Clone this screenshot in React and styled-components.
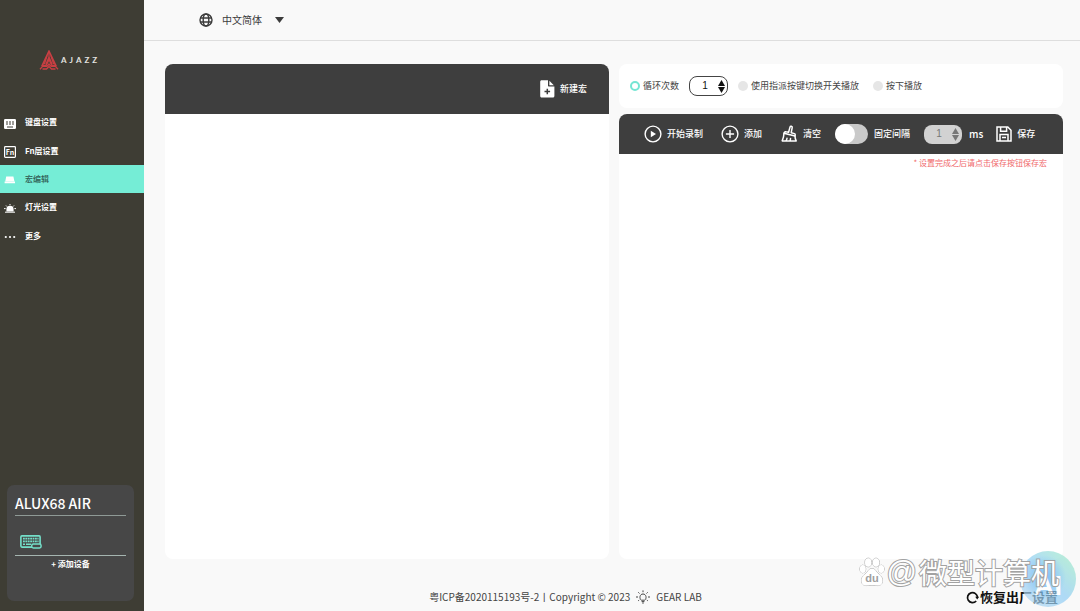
import React, { useState } from "react";
import styled, { createGlobalStyle, css } from "styled-components";

const GlobalStyle = createGlobalStyle`
  *, *::before, *::after { box-sizing: border-box; }
  body {
    margin: 0;
    background: #f9f9f9;
    color: #444;
    font-family: "Noto Sans CJK SC", "Noto Sans", sans-serif;
    font-size: 9px;
    line-height: 14px;
  }
  button, input, select { font: inherit; color: inherit; margin: 0; }
  button { border: 0; background: none; padding: 0; cursor: pointer; }
  a { color: inherit; text-decoration: none; }
`;

const Page = styled.div`
  position: relative;
  display: flex;
  min-height: 100vh;
`;

const Sidebar = styled.aside`
  display: flex;
  flex-direction: column;
  flex: 0 0 144px;
  background: #3e3d34;
  color: #fff;
`;

const Brand = styled.div`
  display: flex;
  align-items: center;
  gap: 2px;
  height: 108px;
  padding: 12px 0 0 39px;
`;

const Wordmark = styled.span`
  color: #e4e4e0;
  font-family: Lato, sans-serif;
  font-size: 8px;
  font-weight: 700;
  letter-spacing: 3px;
`;

const Nav = styled.nav`
  display: grid;
  grid-template-rows: repeat(5, 1fr);
  height: 142px;
`;

const NavLink = styled.a`
  display: flex;
  align-items: center;
  gap: 9px;
  padding-left: 4px;
  font-size: 8px;
  font-weight: 700;
  svg { margin-top: 3px; }
  ${(p) =>
    p.$active &&
    css`
      background: #75edd6;
      color: #2f5a52;
      font-weight: 500;
      svg { color: #fff; }
    `}
`;

const DeviceCard = styled.section`
  margin: auto 10px 10px 7px;
  height: 116px;
  padding: 8px;
  border-radius: 7px;
  background: #474747;
`;

const DeviceName = styled.h2`
  margin: 0;
  padding-bottom: 2px;
  border-bottom: 1px solid #8f9a96;
  font-size: 14px;
  line-height: 20px;
  font-weight: 500;
`;

const DeviceSlot = styled.div`
  display: flex;
  align-items: flex-end;
  height: 40px;
  padding: 0 0 6px 5px;
  border-bottom: 1px solid #a5b5b0;
  color: #74dfc9;
`;

const AddDevice = styled.button`
  display: block;
  width: 100%;
  padding-top: 1px;
  font-size: 8px;
  font-weight: 700;
`;

const Main = styled.div`
  display: flex;
  flex-direction: column;
  flex: 1;
  min-width: 0;
`;

const TopBar = styled.header`
  display: flex;
  align-items: center;
  height: 41px;
  padding-left: 55px;
  border-bottom: 1px solid #dedede;
`;

const Language = styled.label`
  display: flex;
  align-items: center;
  gap: 9px;
  color: #3c3c3c;
`;

const LanguageSelect = styled.select`
  appearance: none;
  width: 44px;
  border: 0;
  padding: 0;
  background: none;
  font-size: 10px;
`;

const Columns = styled.main`
  display: grid;
  grid-template-columns: 1fr 1fr;
  gap: 10px;
  flex: 1;
  padding: 23px 17px 0 21px;
`;

const Panel = styled.section`
  display: flex;
  flex-direction: column;
  flex: 1;
  overflow: hidden;
  border-radius: 8px;
  background: #fff;
`;

const Bar = styled.div`
  display: flex;
  align-items: center;
  background: #3e3e3e;
  color: #fff;
  font-weight: 500;
`;

const MacroBar = styled(Bar)`
  justify-content: flex-end;
  height: 50px;
  padding-right: 22px;
`;

const ToolBar = styled(Bar)`
  height: 40px;
  padding-left: 25px;
`;

const Tool = styled.button`
  display: flex;
  align-items: center;
  gap: 5px;
  margin-right: ${(p) => p.$after || 0}px;
  font-weight: 500;
  white-space: nowrap;
`;

const RightColumn = styled.div`
  display: flex;
  flex-direction: column;
  gap: 6px;
`;

const PlayModes = styled.form`
  display: flex;
  align-items: center;
  height: 44px;
  padding-left: 11px;
  border-radius: 8px;
  background: #fff;
`;

const Choice = styled.label`
  display: flex;
  align-items: center;
  gap: 3px;
  margin-right: ${(p) => p.$after || 0}px;
  white-space: nowrap;
`;

const Radio = styled.input`
  appearance: none;
  width: 10px;
  height: 10px;
  border-radius: 50%;
  background: #e6e6e6;
  &:checked {
    border: 2px solid #75e5d3;
    background: #fff;
  }
`;

const Stepper = styled.span`
  display: flex;
  align-items: center;
  justify-content: space-between;
  width: ${(p) => (p.$muted ? 38 : 39)}px;
  height: ${(p) => (p.$muted ? 19 : 20)}px;
  margin-right: ${(p) => p.$after}px;
  padding: 0 ${(p) => (p.$muted ? 3 : 2)}px 0 10px;
  border: ${(p) => (p.$muted ? "0" : "1px solid #444")};
  border-radius: 8px;
  background: ${(p) => (p.$muted ? "#d2d2d2" : "#fff")};
  color: ${(p) => (p.$muted ? "#777" : "#111")};
`;

const StepperInput = styled.input`
  width: 10px;
  border: 0;
  padding: 0;
  background: none;
  text-align: center;
  font-family: "Liberation Sans", sans-serif;
  font-size: 10px;
`;

const Arrows = styled.span`
  display: flex;
  flex-direction: column;
  gap: 1px;
`;

const Arrow = styled.button`
  display: block;
  height: 6px;
  svg { display: block; }
`;

const SwitchLabel = styled.label`
  display: flex;
  align-items: center;
  gap: 6px;
  margin-right: 14px;
  white-space: nowrap;
`;

const Switch = styled.input`
  appearance: none;
  display: flex;
  width: 33px;
  height: 20px;
  border-radius: 10px;
  background: #c9c9c9;
  &::before {
    content: "";
    width: 20px;
    height: 20px;
    border-radius: 10px;
    background: #fff;
  }
  &:checked { justify-content: flex-end; background: #75edd6; }
`;

const Unit = styled.span`
  margin-right: 13px;
  font-size: 10px;
`;

const Hint = styled.p`
  margin: 2px 16px 0;
  color: #f0676b;
  font-size: 8px;
  text-align: right;
`;

const Footer = styled.footer`
  display: flex;
  align-items: center;
  height: 52px;
  padding: 24px 22px 0 21px;
`;

const Copyright = styled.div`
  display: flex;
  align-items: center;
  justify-content: center;
  gap: 6px;
  flex: 1;
  color: #444;
  font-size: 10px;
  white-space: nowrap;
`;

const ResetButton = styled.button`
  display: flex;
  align-items: center;
  gap: 1px;
  color: #111;
  font-size: 13px;
  font-weight: 700;
  white-space: nowrap;
`;

const Assistant = styled.div`
  position: absolute;
  right: 4px;
  bottom: 4px;
  width: 56px;
  height: 56px;
  opacity: 0.7;
  svg { display: block; }
`;

const Watermark = styled.div`
  position: absolute;
  right: 21px;
  bottom: 19px;
  display: flex;
  align-items: center;
  color: #fff;
  font-size: 28px;
  line-height: 40px;
  -webkit-text-stroke: 2px #a2a2a2;
  paint-order: stroke fill;
  white-space: nowrap;
  pointer-events: none;
`;

const AtSign = styled.span`
  margin: 0 2px;
  font-family: "Liberation Sans", sans-serif;
  font-size: 30px;
`;

const Paw = styled.svg`
  -webkit-text-stroke: 0;
`;

function Logo() {
  return (
    <svg width="20" height="21" viewBox="0 0 20 21" fill="none" stroke="#c93f43">
      <path d="M10 1.2 L3.2 15.5 L7 15.5 L10 9.5 L13 15.5 L16.8 15.5 Z" strokeWidth="1.6" />
      <path d="M10 3v7M8 6l-2.7 8M12 6l2.7 8M10 7l-3 7M10 7l3 7" strokeWidth="1.3" />
      <path d="M1 19.2l2.6-2.8h4.2L10 14l2.2 2.4h4.2L19 19.2M3.5 19h4l2.5-2.5 2.5 2.5h4" strokeWidth="1.3" />
    </svg>
  );
}

function KeyboardIcon() {
  return (
    <svg width="12" height="10" viewBox="0 0 12 10">
      <rect width="12" height="10" rx="1.2" fill="currentColor" />
      <path d="M2 3h2M5 3h2M8 3h2M2 5h2M5 5h2M8 5h2M3 8h6" stroke="#3e3d34" strokeWidth="1" />
    </svg>
  );
}

function FnIcon() {
  return (
    <svg width="12" height="12" viewBox="0 0 12 12" fill="none">
      <rect x=".6" y=".6" width="10.8" height="10.8" rx=".8" stroke="currentColor" strokeWidth="1.2" />
      <text x="6" y="9" textAnchor="middle" fontSize="7" fontWeight="700" fill="currentColor">Fn</text>
    </svg>
  );
}

function MacroIcon() {
  return (
    <svg width="12" height="8" viewBox="0 0 12 8" fill="currentColor">
      <path d="M2.2.5h7.2l1 4.700H1.300zM.6 5.400h10.400v1.800H.6z" />
    </svg>
  );
}

function LightIcon() {
  return (
    <svg width="12" height="9" viewBox="0 0 12 9" fill="currentColor" stroke="currentColor">
      <path d="M2.400 7.500V5.400a3.600 3.600 0 0 1 7.200 0v2.100z" stroke="none" />
      <path d="M1 8.200h10M6 0v1.200M2 1.500l1 1.100M10 1.500l-1 1.100M0 4.600h1.600M10.400 4.600H12" strokeWidth="1" />
    </svg>
  );
}

function MoreIcon() {
  return (
    <svg width="12" height="4" viewBox="0 0 12 4" fill="currentColor">
      <circle cx="1.800" cy="2" r="1.100" /><circle cx="6" cy="2" r="1.100" /><circle cx="10.200" cy="2" r="1.100" />
    </svg>
  );
}

function DeviceIcon() {
  return (
    <svg width="22" height="14" viewBox="0 0 22 14" fill="none" stroke="currentColor">
      <rect x=".9" y=".9" width="19.2" height="11.2" rx="1" strokeWidth="1.6" />
      <path d="M3 3.600h15.500M3 6.300h15.500" strokeWidth="1.700" strokeDasharray="1.800 .6" />
      <path d="M3 9.200h2M6 9.200h5" strokeWidth="1.600" />
      <rect x="11.700" y="9.100" width="9.400" height="3.800" rx="1.600" fill="#474747" strokeWidth="1.500" />
    </svg>
  );
}

function GlobeIcon() {
  return (
    <svg width="14" height="14" viewBox="0 0 14 14" fill="none" stroke="currentColor" strokeWidth="1.4">
      <circle cx="7" cy="7" r="6" />
      <ellipse cx="7" cy="7" rx="2.8" ry="6" />
      <path d="M1.4 5h11.2M1.4 9h11.2" />
    </svg>
  );
}

function NewFileIcon() {
  return (
    <svg width="15" height="18" viewBox="0 0 15 18">
      <path d="M1.6.3H8v5.2c0 .6.4 1 1 1h5.4v9.6c0 .9-.6 1.5-1.5 1.5H1.6C.8 17.6.2 17 .2 16.1V1.8C.2.9.8.3 1.6.3z" fill="currentColor" />
      <path d="M9.4.8l4.4 4.5H9.4z" fill="currentColor" />
      <path d="M7.3 8.7v5.6M4.5 11.5h5.6" stroke="#3e3e3e" strokeWidth="1.5" />
    </svg>
  );
}

function PlayIcon() {
  return (
    <svg width="18" height="18" viewBox="0 0 18 18" fill="none">
      <circle cx="9" cy="9" r="7.9" stroke="currentColor" strokeWidth="1.4" />
      <path d="M6.8 5.8v6.4L12 9z" fill="currentColor" />
    </svg>
  );
}

function PlusIcon() {
  return (
    <svg width="18" height="18" viewBox="0 0 18 18" fill="none" stroke="currentColor" strokeWidth="1.4">
      <circle cx="9" cy="9" r="7.9" />
      <path d="M9 4.9v8.2M4.9 9h8.2" />
    </svg>
  );
}

function BroomIcon() {
  return (
    <svg width="17" height="18" viewBox="0 0 17 18" fill="none" stroke="currentColor" strokeWidth="1.5" strokeLinejoin="round" strokeLinecap="round">
      <path d="M7.600 7.200L9 2.100c.4-1.400 2.500-1 2.200.6l-1 5 3.200.9c.7.2 1 .7.8 1.400l-.2.9L3 8.200c.3-1.200 1-1.600 2-1.400z" />
      <path d="M3 8.200c-.1 2.600-.7 5-1.800 7.700h14c-.8-1.600-1.200-3.200-1.200-5M5 15.800c.6-.8.9-1.600 1-2.600M9 15.800c.4-.8.5-1.400.5-2.200" />
    </svg>
  );
}

function SaveIcon() {
  return (
    <svg width="16" height="16" viewBox="0 0 16 16" fill="none" stroke="currentColor" strokeWidth="1.5">
      <path d="M1 1h10.800L15 4.200V15H1zM4.600 1v4.200h6V1" />
      <path d="M4 15V8.600h8V15M6 11.500h4" />
    </svg>
  );
}

function BulbIcon() {
  return (
    <svg width="14" height="14" viewBox="0 0 14 14" fill="none" stroke="currentColor" strokeWidth="1">
      <path d="M5.400 10.200C3 8.700 3.600 4 7 4s4 4.700 1.600 6.200zM5.600 11.600h2.800M6.200 13h1.600M7 .4v1.800M2.300 2.300l1.200 1.200M11.700 2.300l-1.200 1.200M0 7h2M12 7h2M2.200 10.800l1-.8M11.800 10.800l-1-.8" />
    </svg>
  );
}

function ResetIcon() {
  return (
    <svg width="13" height="13" viewBox="0 0 13 13" fill="none" stroke="currentColor" strokeWidth="1.700">
      <path d="M10.200 10A5 5 0 1 1 11.500 6.500" />
      <path d="M9.200 5.800h4l-2 2.800z" fill="currentColor" stroke="none" />
    </svg>
  );
}

function PawIcon() {
  return (
    <Paw width="26" height="30" viewBox="0 0 26 30" fill="#fff" stroke="#a8a8a8" strokeWidth="1">
      <ellipse cx="3.800" cy="12" rx="3" ry="3.900" />
      <ellipse cx="9.200" cy="5.500" rx="3.200" ry="4.300" />
      <ellipse cx="17" cy="5.500" rx="3.200" ry="4.300" />
      <ellipse cx="22.200" cy="12" rx="3" ry="3.900" />
      <path d="M13 11.500c3.200 0 4.200 3.200 6.500 5.500 2.400 2.200 4.600 4 4 7.400-.6 3.600-3.500 4.600-6.500 4-2.800-.5-5.200-.5-8 0-3 .6-5.900-.4-6.500-4-.6-3.400 1.600-5.200 4-7.400 2.300-2.300 3.300-5.500 6.500-5.500z" />
      <text x="13" y="25" textAnchor="middle" fontFamily="Liberation Sans, sans-serif" fontSize="11" fontWeight="700" fill="#a0a0a0" stroke="none">du</text>
    </Paw>
  );
}

function AssistantIcon() {
  return (
    <svg width="56" height="56" viewBox="0 0 56 56">
      <defs>
        <linearGradient id="orb" x1="0" y1="1" x2="1" y2="0">
          <stop offset="0" stopColor="#b5d8f0" />
          <stop offset=".5" stopColor="#8fcdf5" />
          <stop offset="1" stopColor="#a0efc0" />
        </linearGradient>
        <radialGradient id="glow">
          <stop offset="0" stopColor="#4aa8f4" />
          <stop offset="1" stopColor="#4aa8f4" stopOpacity="0" />
        </radialGradient>
      </defs>
      <circle cx="28" cy="28" r="28" fill="url(#orb)" />
      <circle cx="24" cy="26" r="22" fill="url(#glow)" />
      <text x="28" y="44" textAnchor="middle" fontFamily="Liberation Sans, sans-serif" fontSize="28" fontWeight="700" fill="#fff">AI</text>
    </svg>
  );
}

function Triangle({ down, width = 7, height = 6 }) {
  return (
    <svg width={width} height={height} viewBox="0 0 10 6" preserveAspectRatio="none" fill="currentColor">
      <path d={down ? "M0 0h10L5 6z" : "M0 6h10L5 0z"} />
    </svg>
  );
}

function NumberStepper({ label, muted, after }) {
  const [value, setValue] = useState(1);
  return (
    <Stepper $muted={muted} $after={after}>
      <StepperInput
        aria-label={label}
        inputMode="numeric"
        value={value}
        onChange={(e) => setValue(Number(e.target.value) || 0)}
      />
      <Arrows>
        <Arrow type="button" aria-label="增加" onClick={() => setValue(value + 1)}><Triangle /></Arrow>
        <Arrow type="button" aria-label="减少" onClick={() => setValue(Math.max(1, value - 1))}><Triangle down /></Arrow>
      </Arrows>
    </Stepper>
  );
}

const navItems = [
  { label: "键盘设置", Icon: KeyboardIcon },
  { label: "Fn层设置", Icon: FnIcon },
  { label: "宏编辑", Icon: MacroIcon, active: true },
  { label: "灯光设置", Icon: LightIcon },
  { label: "更多", Icon: MoreIcon },
];

export default function App() {
  return (
    <Page>
      <GlobalStyle />
      <Sidebar>
        <Brand>
          <Logo />
          <Wordmark>AJAZZ</Wordmark>
        </Brand>
        <Nav>
          {navItems.map(({ label, Icon, active }) => (
            <NavLink key={label} href="#" $active={active}>
              <Icon />
              {label}
            </NavLink>
          ))}
        </Nav>
        <DeviceCard>
          <DeviceName>ALUX68 AIR</DeviceName>
          <DeviceSlot><DeviceIcon /></DeviceSlot>
          <AddDevice type="button">+ 添加设备</AddDevice>
        </DeviceCard>
      </Sidebar>

      <Main>
        <TopBar>
          <Language>
            <GlobeIcon />
            <LanguageSelect aria-label="语言">
              <option>中文简体</option>
            </LanguageSelect>
            <Triangle down width={9} height={6} />
          </Language>
        </TopBar>

        <Columns>
          <Panel>
            <MacroBar>
              <Tool type="button"><NewFileIcon />新建宏</Tool>
            </MacroBar>
          </Panel>

          <RightColumn>
            <PlayModes>
              <Choice $after={10}>
                <Radio type="radio" name="mode" defaultChecked />
                循环次数
              </Choice>
              <NumberStepper label="循环次数" after={10} />
              <Choice $after={14}>
                <Radio type="radio" name="mode" />
                使用指派按键切换开关播放
              </Choice>
              <Choice>
                <Radio type="radio" name="mode" />
                按下播放
              </Choice>
            </PlayModes>
            <Panel>
              <ToolBar>
                <Tool type="button" $after={18}><PlayIcon />开始录制</Tool>
                <Tool type="button" $after={19}><PlusIcon />添加</Tool>
                <Tool type="button" $after={14}><BroomIcon />清空</Tool>
                <SwitchLabel>
                  <Switch type="checkbox" />
                  固定间隔
                </SwitchLabel>
                <NumberStepper label="间隔毫秒" muted after={7} />
                <Unit>ms</Unit>
                <Tool type="button"><SaveIcon />保存</Tool>
              </ToolBar>
              <Hint>* 设置完成之后请点击保存按钮保存宏</Hint>
            </Panel>
          </RightColumn>
        </Columns>

        <Footer>
          <Copyright>
            <span>粤ICP备2020115193号-2丨Copyright © 2023</span>
            <BulbIcon />
            <span>GEAR LAB</span>
          </Copyright>
          <ResetButton type="button"><ResetIcon />恢复出厂设置</ResetButton>
        </Footer>
      </Main>

      <Assistant><AssistantIcon /></Assistant>
      <Watermark><PawIcon /><AtSign>@</AtSign>微型计算机</Watermark>
    </Page>
  );
}
